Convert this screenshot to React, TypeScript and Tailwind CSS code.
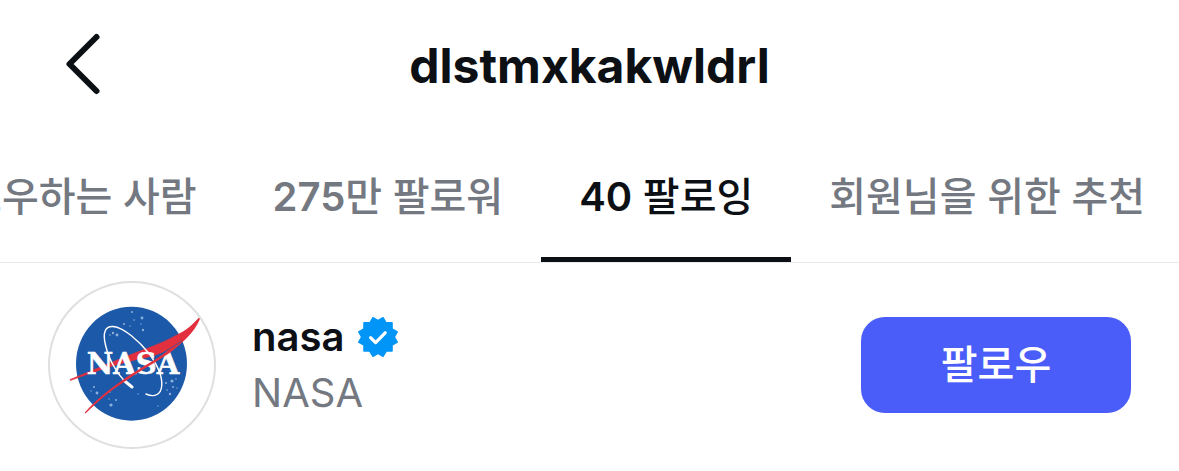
import clsx from "clsx";

const tabs = [
  { id: "mutual", count: "", label: "팔로우하는 사람" },
  { id: "followers", count: "275", label: "만 팔로워" },
  { id: "following", count: "40", label: " 팔로잉" },
  { id: "suggested", count: "", label: "회원님을 위한 추천" },
];

const stars = [
  [84, 31, 1],
  [94, 37, 1.4],
  [95, 49, 1.2],
  [76, 43, 1],
  [86, 39, 0.8],
  [82, 45, 0.7],
  [93, 43, 0.7],
  [65, 52, 1.2],
  [69, 54, 1.4],
  [62, 54, 0.8],
  [46, 106, 1],
  [49, 112, 1.4],
  [43, 110, 0.7],
  [62, 111, 0.8],
  [63, 124, 1.6],
  [68, 119, 1],
  [61, 118, 0.7],
  [110, 125, 0.7],
  [118, 102, 1],
  [124, 100, 1.6],
  [128, 98, 0.8],
  [119, 109, 0.8],
  [125, 106, 1],
  [122, 113, 1.2],
  [129, 107, 0.7],
  [90, 113, 0.7],
];

function BackIcon() {
  return (
    <svg className="w-10 h-16" viewBox="0 0 40 64" fill="none">
      <path
        d="M32.500 5 5.500 32 32.500 59"
        stroke="#0c1014"
        strokeWidth="6"
        strokeLinecap="round"
        strokeLinejoin="round"
      />
    </svg>
  );
}

function VerifiedIcon() {
  return (
    <svg className="w-10 h-10" viewBox="0 0 40 40" role="img" aria-label="인증됨">
      <path
        d="M20 3.800 14.900 .8 12 5.900H6v6.100L.8 14.900 3.800 20 .8 25.100 6 28.100v5.900h5.800L14.900 39.200 20 36.200l5.100 3L28.200 34H34v-5.900l5.200-3L36.200 20l3-5.100L34 11.900v-6h-6L25.100.8Z"
        fill="#0095f6"
        stroke="#0095f6"
        strokeWidth="1.600"
        strokeLinejoin="round"
      />
      <path
        d="m12.600 20.600 5 5 9.600-9.800"
        fill="none"
        stroke="#fff"
        strokeWidth="3.200"
        strokeLinecap="round"
        strokeLinejoin="round"
      />
    </svg>
  );
}

function NasaLogo() {
  return (
    <svg className="w-full h-full" viewBox="2 2 164 164" role="img" aria-label="nasa">
      <ellipse cx="83.500" cy="82.700" rx="55.500" ry="57" fill="#1c59a8" />
      {stars.map(([x, y, r]) => (
        <circle key={`${x}-${y}`} cx={x} cy={y} r={r} fill="#a9c6ea" opacity="0.800" />
      ))}
      <path
        d="M152.700 35C146 43 138 50 128.700 54 118 60 108 64 98.700 67.500 75 76 48 88 22 98.500L22.500 99.500C45 91 75 81 98.700 76.500 112 73.500 120 69 128 65 139 58 149 47 152.700 35Z"
        fill="#e2303f"
        stroke="#e2303f"
        strokeWidth="0.500"
      />
      <path
        d="M84.700 106C72 99 61 80 57.500 64 54.500 52 57 45 65 45.500 76 46.500 91 60 101.500 73 110 85 114.500 97 113.700 105 113 113 107 117 98 113"
        fill="none"
        stroke="#fff"
        strokeWidth="1.400"
        strokeLinecap="round"
      />
      <path d="m76 99.500 8 6.500" stroke="#fff" strokeWidth="3" strokeLinecap="round" />
      <text
        x="85"
        y="93"
        textAnchor="middle"
        fill="#fff"
        stroke="#fff"
        strokeWidth="0.500"
        className="font-['DejaVu_Serif',serif] font-bold text-[29px] [font-kerning:none]"
      >
        NASA
      </text>
      <path
        d="M152.700 35C147 49 138 60 120 73 105 83 90 91 76 101 62 110 49 121 37.500 132.500L36.800 131.500C47 120 60 109 74 99.500 90 88 106 80 118 71Z"
        fill="#e2303f"
      />
      <path d="M134 60 108 76" stroke="#1c59a8" strokeWidth="0.700" />
    </svg>
  );
}

export default function App() {
  return (
    <main className="w-full overflow-hidden bg-white pb-5 font-['Inter','Noto_Sans_CJK_KR',sans-serif] text-[#0c1014]">
      {/* Header */}
      <header className="grid grid-cols-[1fr_auto_1fr] items-center h-32 px-16">
        <button type="button" aria-label="뒤로" className="justify-self-start">
          <BackIcon />
        </button>
        <h1 className="pt-1 text-5xl leading-14 font-bold">dlstmxkakwldrl</h1>
      </header>

      {/* Tabs */}
      <nav className="-mr-1 flex justify-end border-b border-[#e8eaec] whitespace-pre">
        {tabs.map((tab) => (
          <button
            key={tab.id}
            type="button"
            className={clsx(
              "shrink-0 h-[134px] px-[38px] pt-2 border-b-5 text-[40px] leading-12 font-medium",
              tab.id === "following"
                ? "border-[#0c1014]"
                : "border-transparent text-[#737881]"
            )}
          >
            <span className="font-semibold">{tab.count}</span>
            {tab.label}
          </button>
        ))}
      </nav>

      {/* Account row */}
      <section className="flex items-center px-12 pt-[18px]">
        <div className="w-42 h-42 shrink-0 rounded-full border-2 border-[#dddfe1] overflow-hidden">
          <NasaLogo />
        </div>
        <div className="ml-9 flex-1 min-w-0 text-[40px] leading-14">
          <div className="flex items-center gap-3.5">
            <span className="font-semibold">nasa</span>
            <VerifiedIcon />
          </div>
          <p className="text-[#737881]">NASA</p>
        </div>
        <button
          type="button"
          className="w-[270px] h-24 shrink-0 rounded-3xl bg-[#4a5df9] text-white text-[40px] leading-12 font-medium"
        >
          팔로우
        </button>
      </section>
    </main>
  );
}
